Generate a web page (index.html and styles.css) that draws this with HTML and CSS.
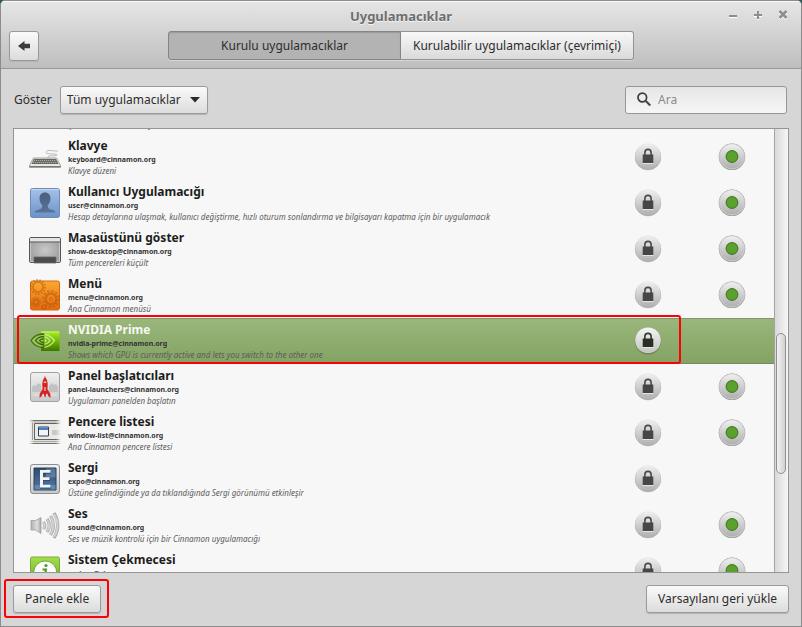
FILE: index.html
```
<!DOCTYPE html>
<html lang="tr">
<head>
<meta charset="utf-8">
<meta name="viewport" content="width=device-width, initial-scale=1">
<title>Uygulamacıklar</title>
<link rel="stylesheet" href="styles.css">
</head>
<body>
<svg class="defs" aria-hidden="true">
  <defs>
    <linearGradient id="g-round" x1="0" y1="0" x2="0" y2="1"><stop offset="0" stop-color="#efefef"/><stop offset="1" stop-color="#b0b0b0"/></linearGradient>
    <linearGradient id="g-roundsel" x1="0" y1="0" x2="0" y2="1"><stop offset="0" stop-color="#f4f4f4"/><stop offset="1" stop-color="#c2c5bf"/></linearGradient>
    <linearGradient id="g-blue" x1="0" y1="0" x2="0" y2="1"><stop offset="0" stop-color="#a6c1e8"/><stop offset="1" stop-color="#6a92c9"/></linearGradient>
    <linearGradient id="g-bust" x1="0" y1="0" x2="0" y2="1"><stop offset="0" stop-color="#4b5f7c"/><stop offset="1" stop-color="#5a7297"/></linearGradient>
    <linearGradient id="g-orange" x1="0" y1="0" x2="0" y2="1"><stop offset="0" stop-color="#fba92f"/><stop offset="1" stop-color="#e4690f"/></linearGradient>
    <linearGradient id="g-nv" x1="0" y1="0" x2="0" y2="1"><stop offset="0" stop-color="#a9ef2c"/><stop offset=".5" stop-color="#70b800"/><stop offset="1" stop-color="#3f7400"/></linearGradient>
    <linearGradient id="g-nvline" gradientUnits="userSpaceOnUse" x1="0" y1="0" x2="32" y2="0"><stop offset=".3" stop-color="#41700f"/><stop offset=".45" stop-color="#2f5507"/><stop offset=".5" stop-color="#c4e58e"/><stop offset="1" stop-color="#d8f0a8"/></linearGradient>
    <linearGradient id="g-gray" x1="0" y1="0" x2="0" y2="1"><stop offset="0" stop-color="#f0f0f0"/><stop offset="1" stop-color="#c8c8c8"/></linearGradient>
    <linearGradient id="g-navy" x1="0" y1="0" x2="0" y2="1"><stop offset="0" stop-color="#2d4a6e"/><stop offset="1" stop-color="#5479a5"/></linearGradient>
    <linearGradient id="g-green" x1="0" y1="0" x2="0" y2="1"><stop offset="0" stop-color="#a3df4b"/><stop offset="1" stop-color="#63a91d"/></linearGradient>
    <radialGradient id="g-desk"><stop offset="0" stop-color="#c9c9c9"/><stop offset="1" stop-color="#a2a2a2"/></radialGradient>
    <linearGradient id="g-fade" x1="0" y1="0" x2="1" y2="0"><stop offset="0" stop-color="#f7f7f7"/><stop offset=".16" stop-color="#f7f7f7" stop-opacity="0"/><stop offset=".84" stop-color="#f7f7f7" stop-opacity="0"/><stop offset="1" stop-color="#f7f7f7"/></linearGradient>
    <linearGradient id="g-snd" x1="0" y1="0" x2="1" y2="0"><stop offset="0" stop-color="#b0b0b0"/><stop offset=".6" stop-color="#dedede"/><stop offset="1" stop-color="#a8a8a8"/></linearGradient>
    <symbol id="lock" viewBox="0 0 28 28">
      <circle cx="14" cy="14" r="13.200" fill="#999" opacity=".75"/>
      <circle cx="14" cy="13.400" r="12.800" fill="url(#g-round)"/>
      <path d="M10.900 12V9.500a3.100 3.100 0 0 1 6.200 0V12" fill="none" stroke="#4a4a4a" stroke-width="1.600"/>
      <path d="M8.700 11.500h10.600V20H8.700z" fill="#464646"/><path d="M8.500 20.500h11" stroke="#eee" stroke-width=".8"/>
    </symbol>
    <symbol id="locksel" viewBox="0 0 28 28">
      <circle cx="14" cy="14.200" r="13.200" fill="#68784f" opacity=".8"/>
      <circle cx="14" cy="13.400" r="12.800" fill="url(#g-roundsel)"/>
      <path d="M10.900 12V9.500a3.100 3.100 0 0 1 6.200 0V12" fill="none" stroke="#30382a" stroke-width="1.600"/>
      <path d="M8.700 11.500h10.600V20H8.700z" fill="#293021"/><path d="M8.500 20.500h11" stroke="#eee" stroke-width=".8"/>
    </symbol>
    <symbol id="active" viewBox="0 0 28 28">
      <circle cx="14" cy="13.800" r="13.300" fill="#9b9b9b"/>
      <circle cx="14" cy="13.400" r="13" fill="#c8c8c8"/>
      <circle cx="14" cy="13.300" r="12" fill="url(#g-round)"/>
      <circle cx="14" cy="13.500" r="5.900" fill="#5aa12d" stroke="#3a6f1b"/>
    </symbol>
  </defs>
</svg>

<div class="window">
  <header class="header">
    <div class="titlebar">
      <h1 class="title">Uygulamacıklar</h1>
      <div class="controls">
        <button class="control" aria-label="Simge durumuna küçült"><svg viewBox="0 0 12 12"><path d="M2 8h8" stroke="#fff" stroke-width="2"/><path d="M2 7h8" stroke="#8e8e8e" stroke-width="2"/></svg></button>
        <button class="control" aria-label="Ekranı kapla"><svg viewBox="0 0 12 12"><path d="M2 7h8M6 3v8" stroke="#fff" stroke-width="2"/><path d="M2 6h8M6 2v8" stroke="#8e8e8e" stroke-width="2"/></svg></button>
        <button class="control" aria-label="Kapat"><svg viewBox="0 0 12 12"><path d="M2.500 3l7 7M9.500 3l-7 7" stroke="#fff" stroke-width="2.500"/><path d="M2.500 2l7 7M9.500 2l-7 7" stroke="#8e8e8e" stroke-width="2.500"/></svg></button>
      </div>
    </div>
    <div class="navbar">
      <button class="button back" aria-label="Geri"><svg viewBox="0 0 14 12"><path d="M1 6l6.500-5v2.800H13v4.400H7.500V11z" fill="#3c3c3c"/></svg></button>
      <div class="tabs">
        <button class="tab tab-on">Kurulu uygulamacıklar</button>
        <button class="tab">Kurulabilir uygulamacıklar (çevrimiçi)</button>
      </div>
    </div>
  </header>

  <main class="main">
    <div class="toolbar">
      <label for="filter">Göster</label>
      <div class="picker">
        <select id="filter" class="button select"><option>Tüm uygulamacıklar</option></select>
        <svg class="arrow" viewBox="0 0 10 6"><path d="M0 0h10L5 5.500z" fill="#2a2a2a"/></svg>
      </div>
      <label class="search">
        <svg class="glass" viewBox="0 0 16 16"><circle cx="6.300" cy="5.500" r="4.300" fill="none" stroke="#3c3c3c" stroke-width="1.700"/><path d="M9.500 8.700l4.800 4.800" stroke="#4a4a4a" stroke-width="2.200"/></svg>
        <input class="search-input" type="search" placeholder="Ara" aria-label="Ara">
      </label>
    </div>

    <section class="panel">
      <ul class="list">
        <li class="row">
          <div class="text text-end"><p class="desc">Çıkarılabilir sürücüleri yönet</p></div>
        </li>
        <li class="row">
          <svg class="icon" viewBox="0 0 32 32"><path d="M19 17c-1-4 8-1 9-3s-12 0-11-3 8-.5 12-1" fill="none" stroke="#b8b8b4" stroke-width="1"/><path d="M4.500 17h23l4 7.500v2H.5v-2z" fill="#e6e6e2" stroke="#8b8b86" stroke-width=".8"/><path d="M5 18h22l2.500 5H2.500z" fill="#686863"/><path d="M5 19.500h22M4 21.500h24" stroke="#bdbdb8" stroke-width=".8" stroke-dasharray="1.200 .8"/><path d="M.5 25.500h31" stroke="#777" stroke-width="1.200"/></svg>
          <div class="text"><h2 class="name">Klavye</h2><p class="uuid">keyboard@cinnamon.org</p><p class="desc">Klavye düzeni</p></div>
          <svg class="mark"><use href="#lock"/></svg><svg class="mark"><use href="#active"/></svg>
        </li>
        <li class="row">
          <svg class="icon" viewBox="0 0 32 32"><rect x="1.500" y="1.500" width="29" height="29" rx="2" fill="url(#g-blue)" stroke="#6f8bb0"/><path d="M2.500 2.500h27" stroke="#c5d8f2"/><path d="M16 5.500c3.500 0 5.500 2.500 5.500 6 0 3-1.300 5.500-2.800 6.700 0 2 .3 3 2.300 4 3 1 5 1.200 5.500 3.300h-21c.5-2.100 2.500-2.300 5.500-3.300 2-1 2.300-2 2.300-4-1.500-1.200-2.800-3.700-2.800-6.700 0-3.500 2-6 5.500-6z" fill="url(#g-bust)"/></svg>
          <div class="text"><h2 class="name">Kullanıcı Uygulamacığı</h2><p class="uuid">user@cinnamon.org</p><p class="desc">Hesap detaylarına ulaşmak, kullanıcı değiştirme, hızlı oturum sonlandırma ve bilgisayarı kapatma için bir uygulamacık</p></div>
          <svg class="mark"><use href="#lock"/></svg><svg class="mark"><use href="#active"/></svg>
        </li>
        <li class="row">
          <svg class="icon" viewBox="0 0 32 32"><rect x=".5" y="4.500" width="31" height="25" rx="1.500" fill="url(#g-desk)" stroke="#565656"/><path d="M1 5h30v3.500H1z" fill="#e4e4e4"/><path d="M.5 9h31" stroke="#666"/><path d="M1.500 10v18.500h29V10" fill="none" stroke="#d0d0d0" stroke-width=".8"/><path d="M5 24h22v6H5z" fill="#4c4c4c" stroke="#686868" stroke-width=".8"/></svg>
          <div class="text"><h2 class="name">Masaüstünü göster</h2><p class="uuid">show-desktop@cinnamon.org</p><p class="desc">Tüm pencereleri küçült</p></div>
          <svg class="mark"><use href="#lock"/></svg><svg class="mark"><use href="#active"/></svg>
        </li>
        <li class="row">
          <svg class="icon" viewBox="0 0 32 32"><rect x="1.500" y="2" width="29" height="29" rx="2" fill="url(#g-orange)" stroke="#cf6a12"/><g fill="none" stroke="#b3560c" opacity=".55"><circle cx="9" cy="8" r="5" stroke-width="1.600"/><circle cx="9" cy="8" r="7" stroke-width="1.800" stroke-dasharray="1.600 1.500"/><circle cx="22" cy="20" r="5.500" stroke-width="2.500"/><circle cx="22" cy="20" r="8" stroke-width="2" stroke-dasharray="2.200 2"/><circle cx="22" cy="20" r="1.500"/><circle cx="7" cy="23" r="2.500" stroke-width="2"/><circle cx="7" cy="23" r="4.500" stroke-width="1.600" stroke-dasharray="1.500 1.300"/><circle cx="15" cy="28" r="2" stroke-width="1.500"/></g></svg>
          <div class="text"><h2 class="name">Menü</h2><p class="uuid">menu@cinnamon.org</p><p class="desc">Ana Cinnamon menüsü</p></div>
          <svg class="mark"><use href="#lock"/></svg><svg class="mark"><use href="#active"/></svg>
        </li>
        <li class="row row-selected">
          <svg class="icon" viewBox="0 0 32 32"><path d="M12 6.500h18.500v19.500H12z" fill="url(#g-nv)"/><path d="M12 7h18" stroke="#c6fa5e"/><path d="M2 15.500C5 11 9 9 13.500 9v13.500C8.500 22.500 4.500 20 2 15.500z" fill="#9cc45a"/><path d="M2 15.500C5 11 9 9 13.500 9c5.500 0 9 3 12 6.500-3 4.500-6.500 7-11.500 7-5.500 0-9.500-3-12-7zM6.500 15.500c2-2.700 4.500-3.800 7.500-3.800 3.500 0 5.500 2 7 4-2 2.600-4 3.800-7 3.800-3.500 0-5.500-1.700-7.500-4zM10.500 15.500c1-1.200 2-1.600 3.500-1.600s2.500 1 3 2c-1 1-1.800 1.500-3 1.500-1.700 0-2.800-.9-3.500-1.900z" fill="none" stroke="url(#g-nvline)" stroke-width="1.300"/></svg>
          <div class="text"><h2 class="name">NVIDIA Prime</h2><p class="uuid">nvidia-prime@cinnamon.org</p><p class="desc">Shows which GPU is currently active and lets you switch to the other one</p></div>
          <svg class="mark"><use href="#locksel"/></svg>
          <span class="ring ring-row"></span>
        </li>
        <li class="row">
          <svg class="icon" viewBox="0 0 32 32"><rect x="1.500" y="1.500" width="29" height="29" rx="2.500" fill="url(#g-gray)" stroke="#a2a2a2"/><path d="M3 21v-5l2-2 2 1 2-3 3 2v7zM20 21v-6l3-3 2 2 2-1 2 3v5z" fill="#c2c2c2"/><path d="M3 25c3-4 7-3 9-1h8c2-2 7-3 9 1" fill="#dcdcdc"/><path d="M16 4.500l.5 2c1.800 2.300 2.200 4.500 2.200 7.500l-.3 4 3 5v4l-2.200-2-.8-2.200h-1.200L16.500 26h-1l-.7-3.200h-1.200l-.8 2.200-2.200 2v-4l3-5-.3-4c0-3 .4-5.200 2.200-7.500z" fill="#d62222"/><path d="M14.700 10.500h2.600v1.600h-2.600zM15.400 16h1.200v4h-1.200z" fill="#f9c2b8"/></svg>
          <div class="text"><h2 class="name">Panel başlatıcıları</h2><p class="uuid">panel-launchers@cinnamon.org</p><p class="desc">Uygulamarı panelden başlatın</p></div>
          <svg class="mark"><use href="#lock"/></svg><svg class="mark"><use href="#active"/></svg>
        </li>
        <li class="row">
          <svg class="icon" viewBox="0 0 32 32"><path d="M0 4h32v22H0z" fill="#dfdfdb"/><path d="M0 3.500h32M0 26.500h32" stroke="#73736e"/><path d="M0 5h32M0 24.500h32" stroke="#aaaaa5"/><path d="M5.500 6.500H34v16H5.500z" fill="#e9e9e6" stroke="#64645f"/><path d="M3.500 6v17" stroke="#777"/><path d="M9.500 10h10v9h-10z" fill="#f4f4f4" stroke="#28435f"/><path d="M10 10.500h9V13h-9z" fill="#4a7fc0"/><path d="M23 13h9v5h-9z" fill="#c8c8c4"/><path d="M0 3h32v24H0z" fill="url(#g-fade)"/></svg>
          <div class="text"><h2 class="name">Pencere listesi</h2><p class="uuid">window-list@cinnamon.org</p><p class="desc">Ana Cinnamon pencere listesi</p></div>
          <svg class="mark"><use href="#lock"/></svg><svg class="mark"><use href="#active"/></svg>
        </li>
        <li class="row">
          <svg class="icon" viewBox="0 0 32 32"><rect x="1.500" y="1.500" width="29" height="29" rx="2.500" fill="url(#g-gray)" stroke="#8e8e8e"/><path d="M5 5h22v22H5z" fill="url(#g-navy)" stroke="#25415f"/><path d="M17 5.500h9.500v9H17zM5.500 22h21v4.500h-21z" fill="#7294b8" opacity=".6"/><path d="M11 8h11v3h-7.500v4H21v3h-6.500v4.500H22V26H11z" fill="#1e334b" opacity=".5"/><path d="M11 7h10.500v2.700H14v4.600h6.500V17H14v4.800h7.500v2.700H11z" fill="#f2f4f6"/></svg>
          <div class="text"><h2 class="name">Sergi</h2><p class="uuid">expo@cinnamon.org</p><p class="desc">Üstüne gelindiğinde ya da tıklandığında Sergi görünümü etkinleşir</p></div>
          <svg class="mark"><use href="#lock"/></svg>
        </li>
        <li class="row">
          <svg class="icon" viewBox="0 0 32 32"><path d="M2 11.500h4.500L12 8.500v16l-5.500-3.500H2z" fill="url(#g-snd)" stroke="#9e9e9e" stroke-width=".8"/><g fill="none" stroke="#a4a4a4"><path d="M14.500 13q2.500 3.500 0 7" stroke-width="3"/><path d="M18 10q4.500 6.500 0 13" stroke-width="3.200"/><path d="M21.500 7q6 9.500 0 19" stroke-width="3.200"/><path d="M25 4q7.500 12.500 0 25" stroke-width="3.200"/></g><g fill="none" stroke="#d2d2d2" stroke-width="2"><path d="M14.500 13.500q2.200 3 0 6M18 10.500q4.500 6 0 12M21.500 7.500q6 9 0 18M25 5q7.200 11.500 0 23"/></g></svg>
          <div class="text"><h2 class="name">Ses</h2><p class="uuid">sound@cinnamon.org</p><p class="desc">Ses ve müzik kontrolü için bir Cinnamon uygulamacığı</p></div>
          <svg class="mark"><use href="#lock"/></svg><svg class="mark"><use href="#active"/></svg>
        </li>
        <li class="row">
          <svg class="icon" viewBox="0 0 32 32"><rect x="1.500" y="2" width="29" height="29" rx="1.500" fill="url(#g-green)" stroke="#79ab3a"/><circle cx="16.200" cy="17.500" r="11.500" fill="#fdfdfd" stroke="#5d9826" stroke-width=".8"/><circle cx="17" cy="10.500" r="1.600" fill="#4d9a22"/><path d="M13.500 14.500h3.500l-1.500 9h2" fill="none" stroke="#4d9a22" stroke-width="2"/></svg>
          <div class="text"><h2 class="name">Sistem Çekmecesi</h2><p class="uuid">systray@cinnamon.org</p></div>
          <svg class="mark"><use href="#lock"/></svg><svg class="mark"><use href="#active"/></svg>
        </li>
      </ul>
      <div class="track"><div class="gap-before"></div><div class="thumb"></div><div class="gap-after"></div></div>
    </section>

    <footer class="footer">
      <div class="action"><button class="button">Panele ekle</button><span class="ring ring-button"></span></div>
      <button class="button">Varsayılanı geri yükle</button>
    </footer>
  </main>
</div>
</body>
</html>
```
FILE: styles.css
```
* { box-sizing: border-box; }

html, body { height: 100%; }

body {
  margin: 0;
  background: #2b5a58;
  color: #2d2d2d;
  font: 12px/16px "Noto Sans", sans-serif;
}

h1, h2, p, ul { margin: 0; padding: 0; }

button, select, input { font: inherit; color: inherit; }

.defs { position: absolute; width: 0; height: 0; }

.window {
  display: flex;
  flex-direction: column;
  height: 100vh;
  border: 1px solid #8c8c8c;
  border-radius: 5px 5px 0 0;
  background: #d6d6d6;
  overflow: hidden;
}

/* Header */
.header {
  height: 68px;
  border-bottom: 1px solid #989898;
  background: linear-gradient(#e6e6e6, #bebebe);
  box-shadow: inset 0 1px #f8f8f8;
}

.titlebar {
  display: grid;
  grid-template-columns: 1fr auto 1fr;
  align-items: center;
  height: 30px;
  padding: 0 6px;
}

.title {
  grid-column: 2;
  color: #6e6e6e;
  font-size: 13px;
  line-height: 20px;
  text-shadow: 0 1px #f4f4f4;
}

.controls { display: flex; justify-content: flex-end; gap: 1px; }

.control {
  display: flex;
  justify-content: center;
  width: 24px;
  padding: 0 0 3px;
  border: 0;
  background: none;
}

.control svg { width: 12px; height: 12px; }

.navbar {
  display: grid;
  grid-template-columns: 1fr auto 1fr;
  padding: 0 8px;
}

.button {
  height: 28px;
  padding: 0 11px;
  border: 1px solid #9a9a9a;
  border-radius: 3px;
  background: linear-gradient(#fafafa, #dcdcdc);
  box-shadow: 0 1px 1px #b4b4b4;
}

.back {
  display: grid;
  place-items: center;
  width: 30px;
  height: 30px;
  padding: 0;
}

.back svg { width: 14px; height: 12px; }

.tabs { display: grid; grid-template-columns: 1fr 1fr; }

.tab {
  height: 29px;
  padding: 0 12px;
  border: 1px solid #929292;
  border-left: 0;
  border-radius: 0 3px 3px 0;
  background: linear-gradient(#f8f8f8, #dadada);
  box-shadow: 0 1px #d6d6d6;
}

.tab-on {
  border: 1px solid #858585;
  border-radius: 3px 0 0 3px;
  background: #b3b3b3;
  box-shadow: inset 0 1px 1px #999, 0 1px #d6d6d6;
}

/* Content */
.main {
  display: flex;
  flex: 1;
  flex-direction: column;
  min-height: 0;
  padding: 17px 12px 13px;
}

.toolbar {
  display: flex;
  align-items: center;
  gap: 8px;
  margin-bottom: 14px;
  padding: 0 2px 0 1px;
}

.picker { position: relative; }

.select { display: block; width: 148px; padding: 0 6px; appearance: none; }

.arrow {
  position: absolute;
  top: 11px;
  right: 8px;
  width: 10px;
  height: 6px;
  pointer-events: none;
}

.search {
  display: flex;
  align-items: center;
  gap: 6px;
  width: 162px;
  height: 28px;
  margin-left: auto;
  padding: 0 10px;
  border: 1px solid #979797;
  border-radius: 3px;
  background: linear-gradient(#e6e6e6, #f6f6f6);
}

.glass { flex: none; width: 16px; height: 16px; }

.search-input {
  width: 100%;
  min-width: 0;
  padding: 0;
  border: 0;
  outline: 0;
  background: none;
}

.search-input::placeholder { color: #8b8b8b; }

.panel {
  display: flex;
  flex: 1;
  min-height: 0;
  border: 1px solid #959595;
  background: #f7f7f7;
  overflow: hidden;
}

/* The list is scrolled so that its first row is almost out of view. */
.list {
  flex: 1;
  margin-top: -41px;
  list-style: none;
}

.row {
  position: relative;
  display: grid;
  grid-template-columns: 32px minmax(0, 1fr) 84px 84px;
  align-items: center;
  height: 46px;
  padding-left: 15px;
}

.row-selected {
  background: linear-gradient(#9bb77c, #83a263);
  box-shadow: inset 0 1px #829767, inset 0 -1px #768b5c;
}

.icon { width: 32px; height: 32px; }

.text {
  align-self: start;
  padding: 3px 0 0 7px;
  white-space: nowrap;
}

.text-end { grid-column: 2; align-self: end; padding-bottom: 4px; }

.name { color: #1d1d1d; font-size: 12px; line-height: 17px; }

.uuid { color: #333; font-size: 7px; font-weight: 700; line-height: 11px; }

.desc { color: #5c5c5c; font-size: 8px; font-style: italic; line-height: 11px; }

.row-selected .name { color: #f5f8f1; }

.mark { justify-self: center; width: 28px; height: 28px; }

.track {
  display: flex;
  flex-direction: column;
  width: 14px;
  padding: 0 2px 0 1px;
  border-left: 1px solid #a4a4a4;
  background: linear-gradient(90deg, #d9d9d9, #f6f6f6);
}

.gap-before { flex: 205; }

.gap-after { flex: 98; }

.thumb {
  flex: 140;
  border: 1px solid #8f8f8f;
  border-radius: 5px;
  background: linear-gradient(90deg, #f2f2f2, #d2d2d2);
}

.footer {
  display: flex;
  justify-content: space-between;
  margin-top: 12px;
}

.action { position: relative; }

/* Red callout frames */
.ring {
  position: absolute;
  border: 2px solid #fb0007;
  border-radius: 3px;
  pointer-events: none;
}

.ring-row { inset: -3px 93px 0 3px; }

.ring-button { inset: -6px -8px -5px -9px; }
```
